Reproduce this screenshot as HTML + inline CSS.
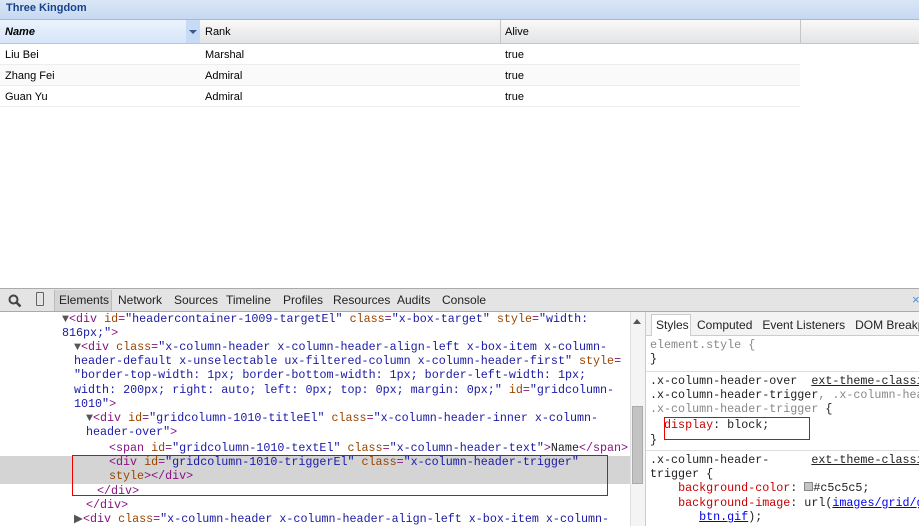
<!DOCTYPE html>
<html><head><style>
*{margin:0;padding:0;box-sizing:border-box}
body{width:919px;height:526px;overflow:hidden;background:#fff;font-family:"Liberation Sans",sans-serif;position:relative}
.abs{position:absolute}
.mono{font-family:"Liberation Mono",monospace;font-size:11.7px;white-space:pre;line-height:14.2px}
.tag{color:#881280}.an{color:#994500}.av{color:#1a1aa6}.tx{color:#222}
.row{position:absolute;left:0;width:800px;height:21px;border-bottom:1px solid #ededed;font-size:11px;color:#000}
.row span{position:absolute;top:5px}
.clip{position:absolute;overflow:hidden}
</style></head><body>
<div class="abs" style="left:0;top:0;width:919px;height:20px;background:linear-gradient(#dae6f6,#c6d9f1);border-bottom:1px solid #99bbe8"></div>
<div class="abs" style="left:6px;top:2px;font-size:11px;font-weight:bold;color:#15428b">Three Kingdom</div>
<div class="abs" style="left:0;top:20px;width:919px;height:24px;background:linear-gradient(#f9f9f9,#e3e4e6);border-bottom:1px solid #c5c5c5"></div>
<div class="abs" style="left:0;top:20px;width:200px;height:24px;background:linear-gradient(#ebf3fd,#d6e5f9);border-right:1px solid #c5c5c5;border-bottom:1px solid #c5c5c5"></div>
<div class="abs" style="left:186px;top:20px;width:14px;height:23px;background:#c7dbf4"></div>
<div class="abs" style="left:189px;top:30px;width:0;height:0;border-left:4px solid transparent;border-right:4px solid transparent;border-top:4px solid #3a5a8c"></div>
<div class="abs" style="left:5px;top:26px;font-size:11px;font-weight:bold;font-style:italic">Name</div>
<div class="abs" style="left:205px;top:26px;font-size:11px">Rank</div>
<div class="abs" style="left:500px;top:20px;width:1px;height:24px;background:#c5c5c5"></div>
<div class="abs" style="left:505px;top:26px;font-size:11px">Alive</div>
<div class="abs" style="left:800px;top:20px;width:1px;height:24px;background:#c5c5c5"></div>
<div class="row" style="top:44px;background:#fff"><span style="left:5px">Liu Bei</span><span style="left:205px">Marshal</span><span style="left:505px">true</span></div>
<div class="row" style="top:65px;background:#fafafa"><span style="left:5px">Zhang Fei</span><span style="left:205px">Admiral</span><span style="left:505px">true</span></div>
<div class="row" style="top:86px;background:#fff"><span style="left:5px">Guan Yu</span><span style="left:205px">Admiral</span><span style="left:505px">true</span></div>

<div class="abs" style="left:0;top:288px;width:919px;height:24px;background:#e4e4e4;border-top:1px solid #aaa;border-bottom:1px solid #aaa"></div>
<svg class="abs" style="left:8px;top:294px" width="14" height="14"><circle cx="5.5" cy="5.5" r="4" fill="none" stroke="#444" stroke-width="2"/><line x1="8.5" y1="8.5" x2="12.5" y2="12.5" stroke="#444" stroke-width="2.5"/></svg>
<div class="abs" style="left:36px;top:292px;width:8px;height:14px;border:1px solid #666;border-radius:1px"></div>
<div class="abs" style="left:54px;top:290px;width:58px;height:21px;background:#d4d4d4;border-left:1px solid #bbb;border-right:1px solid #bbb"></div>
<div class="abs" style="left:59px;top:293px;font-size:12px;color:#222">Elements</div>
<div class="abs" style="left:118px;top:293px;font-size:12px;color:#222">Network</div>
<div class="abs" style="left:174px;top:293px;font-size:12px;color:#222">Sources</div>
<div class="abs" style="left:226px;top:293px;font-size:12px;color:#222">Timeline</div>
<div class="abs" style="left:283px;top:293px;font-size:12px;color:#222">Profiles</div>
<div class="abs" style="left:333px;top:293px;font-size:12px;color:#222">Resources</div>
<div class="abs" style="left:397px;top:293px;font-size:12px;color:#222">Audits</div>
<div class="abs" style="left:442px;top:293px;font-size:12px;color:#222">Console</div>
<div class="abs" style="left:912px;top:292px;font-size:13px;color:#4a90d9">×</div>

<div class="clip" style="left:0;top:312px;width:630px;height:214px">
<div class="abs" style="left:0;top:144px;width:630px;height:28px;background:#d4d4d4"></div>
<div class="abs mono" style="left:62px;top:0px"><span style="color:#555">▼</span><span class="tag">&lt;div</span> <span class="an">id</span><span class="tag">=</span><span class="av">"headercontainer-1009-targetEl"</span> <span class="an">class</span><span class="tag">=</span><span class="av">"x-box-target"</span> <span class="an">style</span><span class="tag">=</span><span class="av">"width:</span>
<span class="av">816px;"</span><span class="tag">&gt;</span></div>
<div class="abs mono" style="left:74px;top:28px"><span style="color:#555">▼</span><span class="tag">&lt;div</span> <span class="an">class</span><span class="tag">=</span><span class="av">"x-column-header x-column-header-align-left x-box-item x-column-</span>
<span class="av">header-default x-unselectable ux-filtered-column x-column-header-first"</span> <span class="an">style</span><span class="tag">=</span>
<span class="av">"border-top-width: 1px; border-bottom-width: 1px; border-left-width: 1px;</span>
<span class="av">width: 200px; right: auto; left: 0px; top: 0px; margin: 0px;"</span> <span class="an">id</span><span class="tag">=</span><span class="av">"gridcolumn-</span>
<span class="av">1010"</span><span class="tag">&gt;</span></div>
<div class="abs mono" style="left:86px;top:99px"><span style="color:#555">▼</span><span class="tag">&lt;div</span> <span class="an">id</span><span class="tag">=</span><span class="av">"gridcolumn-1010-titleEl"</span> <span class="an">class</span><span class="tag">=</span><span class="av">"x-column-header-inner x-column-</span>
<span class="av">header-over"</span><span class="tag">&gt;</span></div>
<div class="abs mono" style="left:109px;top:129px"><span class="tag">&lt;span</span> <span class="an">id</span><span class="tag">=</span><span class="av">"gridcolumn-1010-textEl"</span> <span class="an">class</span><span class="tag">=</span><span class="av">"x-column-header-text"</span><span class="tag">&gt;</span><span class="tx">Name</span><span class="tag">&lt;/span&gt;</span>
<span class="tag">&lt;div</span> <span class="an">id</span><span class="tag">=</span><span class="av">"gridcolumn-1010-triggerEl"</span> <span class="an">class</span><span class="tag">=</span><span class="av">"x-column-header-trigger"</span>
<span class="an">style</span><span class="tag">&gt;&lt;/div&gt;</span></div>
<div class="abs mono" style="left:97px;top:172px"><span class="tag">&lt;/div&gt;</span></div>
<div class="abs mono" style="left:86px;top:186px"><span class="tag">&lt;/div&gt;</span></div>
<div class="abs mono" style="left:74px;top:200px"><span style="color:#555">▶</span><span class="tag">&lt;div</span> <span class="an">class</span><span class="tag">=</span><span class="av">"x-column-header x-column-header-align-left x-box-item x-column-</span></div>
<div class="abs" style="left:72px;top:143px;width:536px;height:41px;border:1px solid #e00"></div>
</div>
<div class="abs" style="left:630px;top:312px;width:15px;height:214px;background:#f4f4f4;border-left:1px solid #e0e0e0"></div>
<div class="abs" style="left:633px;top:319px;width:0;height:0;border-left:4px solid transparent;border-right:4px solid transparent;border-bottom:5px solid #555"></div>
<div class="abs" style="left:632px;top:406px;width:11px;height:78px;background:#c3c3c3;border:1px solid #aaa"></div>

<div class="clip" style="left:645px;top:312px;width:274px;height:214px;background:#fff;border-left:1px solid #ccc">
<div class="abs" style="left:0;top:0;width:274px;height:24px;background:#f3f3f3;border-bottom:1px solid #ccc"></div>
<div class="abs" style="left:5px;top:2px;width:40px;height:22px;background:#fff;border:1px solid #ccc;border-bottom:none"></div>
<div class="abs" style="left:10px;top:6px;font-size:12px;color:#222">Styles</div>
<div class="abs" style="left:51px;top:6px;font-size:12px;color:#222;white-space:nowrap">Computed&nbsp;&nbsp; Event Listeners&nbsp;&nbsp; DOM Breakpoints</div>
<div class="abs mono" style="left:4px;top:26px;color:#888">element.style {
<span class="tx">}</span></div>
<div class="abs" style="left:0;top:59px;width:274px;height:1px;background:#ddd"></div>
<div class="abs mono tx" style="left:4px;top:62px;line-height:14px">.x-column-header-over  <span style="text-decoration:underline">ext-theme-classic</span>
.x-column-header-trigger<span style="color:#888">, .x-column-header-over</span>
<span style="color:#888">.x-column-header-trigger</span> {</div>
<div class="abs mono tx" style="left:4px;top:106px">  <span style="color:#c80000">display</span>: block;</div>
<div class="abs mono tx" style="left:4px;top:121px">}</div>
<div class="abs" style="left:18px;top:105px;width:146px;height:23px;border:1px solid #e00"></div>
<div class="abs" style="left:0;top:138px;width:274px;height:1px;background:#ddd"></div>
<div class="abs mono tx" style="left:4px;top:141px">.x-column-header-      <span style="text-decoration:underline">ext-theme-classic</span>
trigger {
    <span style="color:#c80000">background-color</span>: <span style="display:inline-block;width:9px;height:9px;background:#c5c5c5;border:1px solid #888"></span>#c5c5c5;
    <span style="color:#c80000">background-image</span>: url(<span style="color:#00e;text-decoration:underline">images/grid/grid3-hd-</span>
       <span style="color:#00e;text-decoration:underline">btn.gif</span>);</div>
</div>
</body></html>
